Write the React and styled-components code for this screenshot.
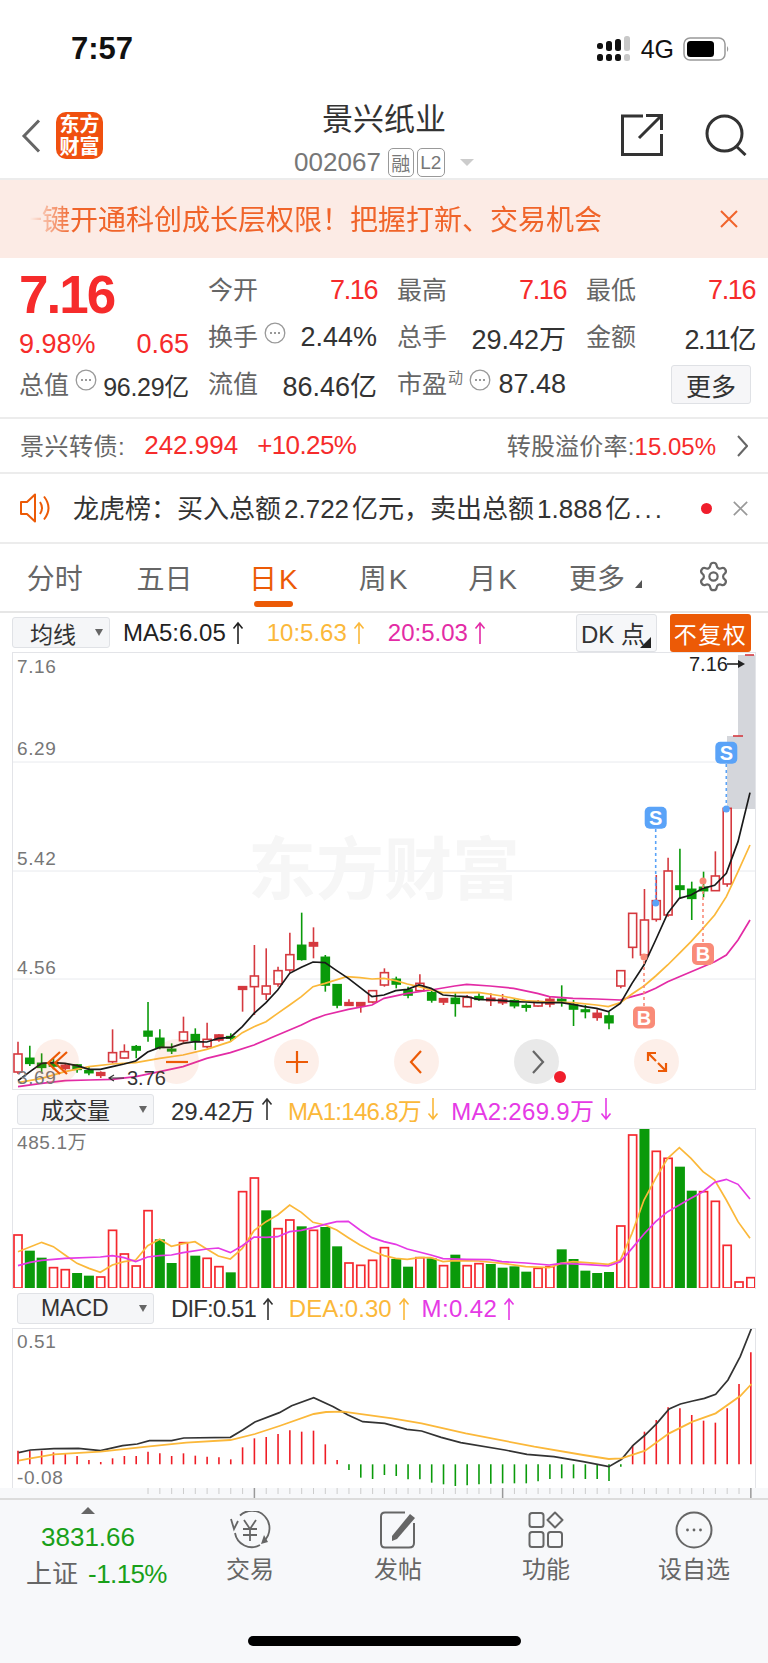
import React from 'react';
import styled, { createGlobalStyle } from 'styled-components';
import { Settings } from 'lucide-react';

const RED = '#f62b2b';
const ORANGE = '#f0642a';
const YELLOW = '#fbb83a';
const PINK = '#e32ba5';
const VIOLET = '#e53ae5';
const GREEN = '#0a9a0a';
const CANDLE_RED = '#d5393f';

const GlobalStyle = createGlobalStyle`
  html, body {
    margin: 0;
    padding: 0;
    background: #fff;
  }
  body {
    font-family: "Liberation Sans", "Noto Sans CJK SC", sans-serif;
    color: #333;
  }
`;

const Page = styled.div`
  width: 768px;
  height: 1663px;
  overflow: hidden;
  display: flex;
  flex-direction: column;
  background: #fff;
`;

/* status bar */
const StatusBar = styled.div`
  height: 90px;
  box-sizing: border-box;
  padding: 8px 38px 0 71px;
  display: flex;
  align-items: center;
  justify-content: space-between;
`;

const Clock = styled.div`
  font-size: 31px;
  font-weight: 700;
  color: #111;
`;

const StatusIcons = styled.div`
  display: flex;
  align-items: center;
`;

const Carrier = styled.span`
  font-size: 25px;
  color: #111;
  margin: 0 9px;
`;

/* nav */
const NavBar = styled.div`
  height: 90px;
  box-sizing: border-box;
  border-bottom: 2px solid #ececec;
  display: grid;
  grid-template-columns: 1fr auto 1fr;
`;

const NavLeft = styled.div`
  display: flex;
  align-items: center;
  padding: 3px 0 0 21px;
  gap: 15px;
`;

const NavRight = styled.div`
  display: flex;
  align-items: center;
  justify-content: flex-end;
  padding: 2px 21px 0 0;
  gap: 42px;
`;

const Logo = styled.div`
  width: 47px;
  height: 47px;
  border-radius: 10px;
  background: #f0500f;
  color: #fff;
  font-size: 20px;
  line-height: 22px;
  font-weight: 700;
  text-align: center;
  display: flex;
  align-items: center;
  justify-content: center;
`;

const NavCenter = styled.div`
  display: flex;
  flex-direction: column;
  align-items: center;
  padding-top: 14px;
`;

const Title = styled.div`
  font-size: 31px;
  line-height: 32px;
  color: #333;
`;

const CodeRow = styled.div`
  display: flex;
  align-items: center;
  margin-top: 11px;
  gap: 3px;
  font-size: 26px;
  color: #777;
`;

const Code = styled.span`
  margin-right: 4px;
`;

const Tag = styled.span`
  width: ${(p) => p.$w}px;
  height: 29px;
  box-sizing: border-box;
  border: 1px solid #999;
  border-radius: 5px;
  font-size: 19px;
  color: #777;
  display: flex;
  align-items: center;
  justify-content: center;
`;

const CaretDown = styled.span`
  width: 0;
  height: 0;
  margin-left: 12px;
  border-left: 7px solid transparent;
  border-right: 7px solid transparent;
  border-top: 7px solid #ccc;
`;

/* promo banner */
const Banner = styled.div`
  height: 78px;
  background: #fcebe5;
  display: flex;
  align-items: center;
  justify-content: space-between;
  padding: 0 30px 0 14px;
`;

const BannerText = styled.div`
  font-size: 28px;
  color: ${ORANGE};
  white-space: nowrap;
  margin-bottom: 2px;
  mask-image: linear-gradient(to right, transparent 16px, #000 58px);
`;

/* quote block */
const Quote = styled.div`
  height: 161px;
  box-sizing: border-box;
  border-bottom: 2px solid #ececec;
  padding: 9px 13px 0 19px;
  display: flex;
`;

const QuoteLeft = styled.div`
  width: 170px;
  margin-right: 19px;
  flex: none;
`;

const BigPrice = styled.div`
  height: 55px;
  line-height: 55px;
  font-size: 53px;
  font-weight: 700;
  color: ${RED};
  letter-spacing: -2px;
`;

const ChangeRow = styled.div`
  height: 45px;
  display: flex;
  align-items: center;
  justify-content: space-between;
  font-size: 27px;
  color: ${RED};
`;

const CapRow = styled.div`
  height: 36px;
  display: flex;
  align-items: center;
  color: #666;
  font-size: 25px;
`;

const CapValue = styled.span`
  margin-left: auto;
  font-size: 25px;
  letter-spacing: -0.3px;
  color: #333;
  white-space: nowrap;
`;

const StatGrid = styled.div`
  display: grid;
  grid-template-columns: repeat(3, 169px);
  grid-auto-rows: 47px;
  column-gap: 20px;
`;

const StatCell = styled.div`
  display: flex;
  align-items: center;
  white-space: nowrap;
`;

const StatLabel = styled.span`
  font-size: 25px;
  color: #666;
  margin-bottom: 5px;
`;

const StatSup = styled.sup`
  font-size: 15px;
  line-height: 1;
  color: #777;
  margin-left: 1px;
  margin-bottom: 14px;
`;

const StatValue = styled.span`
  margin-left: auto;
  font-size: 27px;
  color: ${(p) => (p.$red ? RED : '#333')};
  letter-spacing: ${(p) => (p.$tight ? '-1.4px' : '0')};
`;

const HintIcon = styled.svg`
  width: 22px;
  height: 22px;
  margin: 0 0 10px 6px;
  flex: none;
`;

const MoreButton = styled.div`
  margin-left: auto;
  margin-right: 4px;
  width: 80px;
  height: 39px;
  box-sizing: border-box;
  background: #f6f6f8;
  border: 1px solid #dfe1e5;
  border-radius: 3px;
  font-size: 25px;
  color: #333;
  display: flex;
  align-items: center;
  justify-content: center;
`;

/* convertible bond row */
const BondRow = styled.div`
  height: 55px;
  box-sizing: border-box;
  border-bottom: 2px solid #ececec;
  padding: 0 20px;
  display: flex;
  align-items: center;
  font-size: 24px;
  color: #666;
`;

const BondName = styled.span`
  letter-spacing: 0.5px;
  margin-bottom: 3px;
`;

const BondFigure = styled.span`
  font-size: 26px;
  color: ${RED};
  margin-left: ${(p) => p.$gap}px;
  letter-spacing: ${(p) => p.$spacing || 0}px;
`;

const BondPremium = styled.span`
  margin-left: auto;
  margin-right: 21px;
  letter-spacing: 0.2px;
  margin-bottom: 2px;
`;

const RedText = styled.span`
  color: ${RED};
  letter-spacing: 0;
`;

/* notice row */
const NoticeRow = styled.div`
  height: 70px;
  box-sizing: border-box;
  border-bottom: 2px solid #ececec;
  display: flex;
  align-items: center;
  padding: 0 20px;
`;

const NoticeText = styled.span`
  margin: 0 0 3px 21px;
  font-size: 26px;
  color: #333;
  white-space: nowrap;
`;

const NoticeNumber = styled.span`
  margin: 0 3px;
`;

const NoticeMore = styled.span`
  letter-spacing: 3px;
  margin-left: 3px;
`;

const NoticeDot = styled.span`
  width: 11px;
  height: 11px;
  margin-left: auto;
  margin-right: 21px;
  border-radius: 50%;
  background: #f01e2c;
`;

/* period tabs */
const TabBar = styled.div`
  height: 69px;
  box-sizing: border-box;
  border-bottom: 2px solid #e6e6e6;
  display: grid;
  grid-template-columns: repeat(7, 1fr);
`;

const Tab = styled.div`
  position: relative;
  display: flex;
  align-items: center;
  justify-content: center;
  padding: 0 0 2px ${(p) => p.$inset || 0}px;
  font-size: 28px;
  letter-spacing: ${(p) => (p.$spread ? '2px' : '0')};
  color: ${(p) => (p.$active ? '#ec5a06' : '#666')};
`;

const TabMark = styled.span`
  position: absolute;
  bottom: 4px;
  left: 50%;
  width: 39px;
  height: 6px;
  margin-left: -20px;
  border-radius: 3px;
  background: #ec5a06;
`;

const TabCorner = styled.span`
  width: 0;
  height: 0;
  margin: 14px 0 0 10px;
  border-left: 7px solid transparent;
  border-bottom: 8px solid #555;
`;

/* legend toolbars */
const Toolbar = styled.div`
  height: ${(p) => p.$h}px;
  box-sizing: border-box;
  display: flex;
  align-items: center;
  padding: 0 17px 0 ${(p) => p.$left}px;
`;

const SelectBox = styled.div`
  width: ${(p) => p.$w}px;
  height: 31px;
  box-sizing: border-box;
  background: #f5f6f8;
  border: 1px solid #e0e2e6;
  border-radius: 3px;
  font-size: 23px;
  color: #333;
  display: flex;
  align-items: center;
  padding: 0 6px 0 ${(p) => p.$pad}px;
  margin-right: ${(p) => p.$gap}px;
`;

const SelectCaret = styled.span`
  width: 0;
  height: 0;
  margin-left: auto;
  border-left: 4px solid transparent;
  border-right: 4px solid transparent;
  border-top: 7px solid #666;
`;

const Legend = styled.span`
  display: flex;
  align-items: center;
  font-size: 24px;
  white-space: nowrap;
  color: ${(p) => p.$color};
  margin-right: ${(p) => p.$gap}px;
  letter-spacing: ${(p) => p.$spacing || 0}px;
`;

const ArrowGlyph = styled.svg`
  width: 12px;
  height: 24px;
  margin-left: 6px;
`;

const DkButton = styled.div`
  margin-left: auto;
  width: 81px;
  height: 38px;
  box-sizing: border-box;
  background: #f6f7f9;
  border: 1px solid #e0e2e6;
  border-radius: 3px;
  font-size: 24px;
  color: #333;
  position: relative;
  display: flex;
  align-items: center;
  padding-left: 4px;
`;

const DkCorner = styled.span`
  position: absolute;
  right: 5px;
  bottom: 3px;
  width: 0;
  height: 0;
  border-left: 11px solid transparent;
  border-bottom: 11px solid #222;
`;

const PlainButton = styled.div`
  margin-left: 13px;
  width: 81px;
  height: 38px;
  background: #ec5a06;
  border-radius: 3px;
  color: #fff;
  font-size: 23px;
  letter-spacing: 1.5px;
  display: flex;
  align-items: center;
  justify-content: center;
`;

/* chart panels */
const ChartPanel = styled.div`
  position: relative;
  margin-left: 12px;
  width: 744px;
  box-sizing: border-box;
  border: 1px solid #e3e4e8;
  border-bottom-width: ${(p) => (p.$open ? 0 : 1)}px;
  height: ${(p) => p.$h}px;
  overflow: hidden;
`;

const ChartSvg = styled.svg`
  display: block;
  width: 742px;
  height: ${(p) => p.$h}px;
`;

const AxisLabel = styled.text`
  font-size: 19px;
  letter-spacing: 0.6px;
  fill: #777;
`;

const Watermark = styled.div`
  position: absolute;
  left: 235px;
  top: 172px;
  font-size: 68px;
  font-weight: 700;
  line-height: 90px;
  color: #f6f6f6;
  white-space: nowrap;
`;

const ControlRow = styled.div`
  position: absolute;
  left: 21px;
  bottom: 5px;
  display: flex;
  gap: 75px;
`;

const ControlButton = styled.div`
  position: relative;
  width: 45px;
  height: 45px;
  border-radius: 50%;
  background: ${(p) => (p.$muted ? 'rgba(225,225,225,0.75)' : 'rgba(240,100,40,0.1)')};
  display: flex;
  align-items: center;
  justify-content: center;
`;

const ControlDot = styled.span`
  position: absolute;
  left: 40px;
  top: 32px;
  width: 12px;
  height: 12px;
  border-radius: 50%;
  background: #f01e2c;
`;

const TickStrip = styled.svg`
  display: block;
  width: 768px;
  height: 10px;
  background: #f7f8fa;
`;

/* bottom bar */
const BottomBar = styled.div`
  flex: 1;
  position: relative;
  border-top: 2px solid #dcdcdc;
  background: #f7f8fa;
  display: grid;
  grid-template-columns: 176px repeat(4, 148px);
  align-items: start;
`;

const IndexBlock = styled.div`
  display: flex;
  flex-direction: column;
  align-items: center;
  padding-top: 7px;
`;

const IndexCaret = styled.span`
  width: 0;
  height: 0;
  border-left: 7px solid transparent;
  border-right: 7px solid transparent;
  border-bottom: 7px solid #666;
`;

const IndexValue = styled.div`
  margin-top: 8px;
  font-size: 26px;
  line-height: 30px;
  color: #19a019;
`;

const IndexRow = styled.div`
  margin: 5px 0 0 17px;
  display: flex;
  align-items: center;
  gap: 10px;
  font-size: 26px;
  line-height: 34px;
  color: #666;
  white-space: nowrap;
`;

const IndexChange = styled.span`
  color: #19a019;
  letter-spacing: -0.6px;
`;

const ActionItem = styled.div`
  display: flex;
  flex-direction: column;
  align-items: center;
  padding-top: 11px;
  color: #666;
`;

const ActionLabel = styled.div`
  margin-top: 7px;
  font-size: 24px;
  line-height: 28px;
  color: #666;
`;

const HomeIndicator = styled.div`
  position: absolute;
  left: 248px;
  bottom: 17px;
  width: 273px;
  height: 10px;
  border-radius: 5px;
  background: #000;
`;

/* --- data, read off the picture: y values are 3x crop coordinates --- */
const candleX = (i) => 18 + 11.82 * i;
const toY = (z) => 610 + z / 3;
const volY = (z) => 1085 + z / 3;
const macdY = (z) => 1290 + z / 3;

// [kind, bodyTop, bodyBottom, high, low] r hollow red, f filled red, g green
const candles = [
  ['r', 1332, 1386, 1295, 1392], ['g', 1345, 1360, 1307, 1368], ['g', 1360, 1372, 1330, 1390],
  ['g', 1358, 1368, 1345, 1378], ['f', 1366, 1375, 1360, 1382], ['g', 1365, 1378, 1362, 1388],
  ['g', 1382, 1388, 1370, 1396], ['f', 1388, 1396, 1384, 1404], ['r', 1328, 1355, 1258, 1360],
  ['r', 1325, 1344, 1303, 1346], ['g', 1310, 1320, 1305, 1345], ['g', 1264, 1278, 1176, 1295],
  ['g', 1285, 1312, 1258, 1318], ['g', 1318, 1322, 1300, 1332], ['r', 1266, 1292, 1220, 1298],
  ['g', 1274, 1292, 1255, 1320], ['r', 1288, 1310, 1238, 1315], ['f', 1275, 1290, 1272, 1295],
  ['g', 1280, 1282, 1270, 1295], ['f', 1130, 1138, 1130, 1205], ['r', 1098, 1130, 1005, 1215],
  ['r', 1128, 1152, 1015, 1170], ['r', 1082, 1122, 1070, 1130], ['r', 1034, 1080, 968, 1088],
  ['g', 1006, 1048, 908, 1052], ['f', 998, 1008, 952, 1045], ['g', 1042, 1125, 1035, 1145],
  ['g', 1124, 1185, 1124, 1195], ['f', 1178, 1186, 1168, 1188], ['f', 1178, 1188, 1178, 1208],
  ['r', 1142, 1176, 1140, 1180], ['r', 1088, 1125, 1075, 1130], ['g', 1108, 1122, 1100, 1135],
  ['g', 1140, 1155, 1130, 1165], ['r', 1120, 1142, 1093, 1145], ['g', 1148, 1170, 1140, 1178],
  ['f', 1166, 1176, 1166, 1185], ['g', 1165, 1180, 1150, 1220], ['r', 1162, 1190, 1155, 1192],
  ['g', 1160, 1168, 1150, 1172], ['f', 1165, 1172, 1150, 1188], ['f', 1168, 1178, 1152, 1185],
  ['g', 1172, 1187, 1165, 1195], ['g', 1187, 1190, 1180, 1205], ['r', 1175, 1188, 1170, 1190],
  ['f', 1168, 1182, 1160, 1192], ['g', 1168, 1172, 1126, 1190], ['g', 1185, 1197, 1170, 1248],
  ['g', 1200, 1204, 1185, 1225], ['f', 1210, 1222, 1198, 1232], ['g', 1218, 1238, 1205, 1258],
  ['r', 1082, 1128, 1080, 1135], ['r', 910, 1012, 910, 1045], ['r', 930, 1035, 837, 1050],
  ['r', 872, 928, 795, 935], ['r', 783, 915, 743, 920], ['g', 828, 838, 716, 865],
  ['g', 838, 865, 815, 930], ['g', 832, 842, 785, 862], ['r', 798, 842, 724, 842],
  ['r', 595, 822, 595, 830],
];

const splitLine = (left, right, yFn) =>
  [...left.map(([x, y]) => [x / 3, yFn(y)]), ...right.map(([x, y]) => [384 + x / 3, yFn(y)])]
    .map((p) => p.join(','))
    .join(' ');

const ma5 = splitLine(
  [[54, 1412], [90, 1385], [125, 1360], [160, 1358], [195, 1360], [231, 1367], [267, 1378], [301, 1378], [337, 1370], [372, 1362], [407, 1353], [443, 1326], [479, 1312], [514, 1312], [549, 1300], [585, 1295], [620, 1296], [655, 1285], [691, 1282], [727, 1250], [762, 1210], [798, 1178], [833, 1140], [869, 1090], [904, 1072], [939, 1056], [975, 1058], [1010, 1082], [1045, 1105], [1080, 1132], [1116, 1160]],
  [[0, 1155], [35, 1142], [70, 1138], [105, 1125], [141, 1135], [177, 1155], [212, 1158], [248, 1160], [283, 1168], [318, 1170], [354, 1172], [389, 1175], [425, 1176], [460, 1178], [496, 1178], [531, 1178], [567, 1183], [602, 1190], [638, 1195], [673, 1205], [709, 1180], [744, 1120], [780, 1065], [815, 990], [851, 910], [886, 865], [921, 855], [957, 835], [992, 826], [1027, 790], [1062, 695], [1098, 548]],
  toY
);
const ma10 = splitLine(
  [[54, 1418], [125, 1405], [195, 1385], [267, 1370], [337, 1362], [407, 1358], [479, 1345], [549, 1335], [620, 1318], [691, 1295], [727, 1268], [762, 1250], [798, 1235], [833, 1210], [869, 1185], [904, 1160], [939, 1130], [975, 1120], [1040, 1100], [1080, 1103], [1116, 1107]],
  [[0, 1105], [35, 1112], [70, 1122], [105, 1130], [141, 1140], [177, 1148], [212, 1148], [283, 1147], [354, 1158], [425, 1172], [496, 1176], [567, 1178], [638, 1185], [673, 1190], [709, 1178], [744, 1152], [780, 1128], [815, 1098], [851, 1065], [886, 1030], [921, 995], [957, 955], [992, 915], [1027, 860], [1062, 785], [1098, 705]],
  toY
);
const ma20 = splitLine(
  [[54, 1430], [125, 1420], [195, 1412], [267, 1410], [337, 1408], [407, 1400], [479, 1385], [549, 1370], [620, 1345], [691, 1328], [762, 1305], [833, 1275], [904, 1245], [939, 1228], [975, 1215], [1045, 1198], [1116, 1185]],
  [[0, 1165], [70, 1150], [141, 1140], [212, 1128], [248, 1123], [318, 1128], [389, 1135], [460, 1150], [496, 1160], [567, 1165], [638, 1167], [709, 1170], [744, 1160], [780, 1150], [815, 1135], [851, 1115], [886, 1100], [957, 1070], [992, 1055], [1027, 1035], [1062, 990], [1098, 930]],
  toY
);

// [kind, top]
const volumes = [
  ['r', 450], ['g', 497], ['g', 518], ['r', 548], ['r', 554], ['g', 564], ['g', 572], ['r', 576],
  ['r', 436], ['r', 507], ['r', 543], ['r', 377], ['g', 463], ['g', 534], ['r', 473], ['g', 512],
  ['r', 520], ['r', 545], ['g', 562], ['r', 320], ['r', 279], ['g', 376], ['r', 431], ['r', 405],
  ['g', 424], ['r', 436], ['g', 426], ['g', 484], ['r', 534], ['r', 541], ['r', 526], ['r', 488],
  ['g', 522], ['g', 545], ['r', 518], ['g', 520], ['r', 542], ['g', 509], ['r', 542], ['r', 536],
  ['g', 537], ['g', 548], ['g', 544], ['g', 560], ['r', 550], ['r', 545], ['g', 493], ['g', 522],
  ['g', 557], ['g', 564], ['g', 561], ['r', 423], ['r', 150], ['g', 132], ['r', 199], ['r', 220],
  ['g', 245], ['g', 317], ['r', 320], ['r', 349], ['r', 481], ['r', 591], ['r', 578],
];

const volMa1 = splitLine(
  [[54, 500], [125, 472], [160, 485], [195, 510], [231, 535], [267, 550], [301, 562], [337, 540], [372, 530], [407, 525], [443, 482], [479, 463], [514, 484], [549, 476], [585, 470], [620, 492], [655, 513], [691, 522], [727, 490], [762, 437], [798, 410], [833, 390], [869, 360], [904, 382], [939, 412], [975, 420], [1010, 435], [1045, 458], [1080, 480], [1116, 498]],
  [[0, 512], [35, 520], [70, 523], [105, 518], [141, 518], [177, 530], [212, 527], [283, 528], [354, 535], [425, 545], [496, 548], [531, 535], [567, 530], [638, 535], [673, 538], [709, 525], [744, 445], [780, 345], [815, 280], [851, 220], [886, 188], [921, 220], [957, 260], [992, 285], [1027, 345], [1062, 410], [1098, 460]],
  volY
);
const volMa2 = splitLine(
  [[54, 542], [90, 532], [125, 526], [195, 520], [301, 516], [337, 512], [372, 518], [407, 530], [443, 516], [479, 512], [514, 510], [549, 503], [620, 492], [655, 489], [691, 503], [727, 482], [762, 456], [798, 457], [833, 455], [869, 440], [904, 436], [939, 428], [975, 418], [1010, 410], [1045, 409], [1080, 435], [1116, 458]],
  [[0, 470], [35, 478], [70, 492], [141, 510], [177, 521], [248, 523], [318, 524], [354, 530], [425, 534], [496, 540], [531, 535], [602, 538], [673, 543], [709, 530], [744, 490], [780, 447], [815, 410], [851, 380], [886, 360], [921, 340], [957, 320], [992, 292], [1027, 283], [1062, 298], [1098, 342]],
  volY
);

// macd crop has x scaled by 2.04 and y by 3; the bar value is the far end from zero
const MACD_ZERO = 523;
const macdBars = [
  482, 482, 482, 487, 490, 498, 510, 516, 505, 498, 498, 485, 490, 498, 490, 497, 500, 502, 508,
  472, 445, 441, 432, 421, 425, 422, 463, 510,
  540, 563, 567, 555, 558, 568, 568, 578, 583, 588, 586, 583, 581, 580, 580, 580, 574, 567, 565, 565, 567, 567, 573, 530,
  465, 425, 390, 352, 355, 375, 392, 398, 355, 282, 187,
];

const macdLine = (pts) => pts.map(([x, y]) => `${x / 2.04},${macdY(y)}`).join(' ');
const dif = macdLine([[38, 488], [62, 480], [110, 476], [160, 475], [205, 482], [250, 467], [280, 462], [305, 452], [350, 452], [375, 444], [470, 442], [495, 420], [520, 396], [570, 368], [595, 347], [640, 323], [680, 350], [710, 375], [740, 395], [785, 400], [830, 418], [860, 423], [900, 442], [940, 458], [1030, 480], [1075, 493], [1130, 500], [1190, 515], [1242, 530], [1268, 508], [1292, 465], [1316, 435], [1340, 400], [1365, 357], [1388, 342], [1413, 333], [1437, 325], [1460, 313], [1485, 270], [1510, 200], [1533, 115]]);
const dea = macdLine([[38, 512], [62, 505], [110, 493], [205, 485], [300, 470], [380, 458], [470, 450], [520, 432], [570, 408], [640, 372], [665, 366], [700, 365], [800, 385], [860, 400], [950, 430], [1090, 470], [1190, 495], [1242, 507], [1268, 505], [1316, 482], [1365, 430], [1413, 395], [1460, 370], [1510, 318], [1533, 282]]);

/* --- small drawings --- */
const SignalIcon = () => (
  <svg width="36" height="26" viewBox="0 0 36 26">
    {[[1, 7, 13], [10, 5, 15], [19, 3, 15], [28, 0, 15]].map(([x, top, bottom], i) => (
      <g key={x} fill={i === 3 ? '#c8c8c8' : '#111'}>
        <rect x={x} y={top} width="6" height={bottom - top} rx="2.5" />
        <rect x={x} y="18" width="6" height="7" rx="2.5" />
      </g>
    ))}
  </svg>
);

const BatteryIcon = () => (
  <svg width="47" height="24" viewBox="0 0 47 24">
    <rect x="1" y="1" width="41" height="22" rx="6" fill="none" stroke="#999" strokeWidth="1.5" />
    <rect x="4" y="4" width="27" height="16" rx="3.5" fill="#000" />
    <path d="M44 9 q2.5 3 0 6z" fill="#999" />
  </svg>
);

const BackIcon = () => (
  <svg width="20" height="34" viewBox="0 0 20 34" fill="none" stroke="#666" strokeWidth="3">
    <path d="M18 1.5 L3 17 L18 32.5" />
  </svg>
);

const ShareIcon = () => (
  <svg width="42" height="42" viewBox="0 0 42 42" fill="none" stroke="#333" strokeWidth="3">
    <path d="M22 2 H1.5 V40.5 H40.5 V20" />
    <path d="M18 24 L40 2 M25 1.5 H40.5 V16" />
  </svg>
);

const SearchIcon = () => (
  <svg width="42" height="42" viewBox="0 0 42 42" fill="none" stroke="#333" strokeWidth="3">
    <circle cx="19.5" cy="19.5" r="17.5" />
    <path d="M31 32 L40.5 41" />
  </svg>
);

const CloseIcon = ({ size, color }) => (
  <svg width={size} height={size} viewBox="0 0 18 18" fill="none" stroke={color} strokeWidth="2">
    <path d="M1 1 L17 17 M17 1 L1 17" />
  </svg>
);

const Hint = () => (
  <HintIcon viewBox="0 0 22 22">
    <circle cx="11" cy="11" r="9.8" fill="none" stroke="#999" strokeWidth="1.3" />
    <circle cx="7" cy="11" r="1" fill="#777" />
    <circle cx="11" cy="11" r="1" fill="#777" />
    <circle cx="15" cy="11" r="1" fill="#777" />
  </HintIcon>
);

const ChevronRight = () => (
  <svg width="11" height="22" viewBox="0 0 11 22" fill="none" stroke="#666" strokeWidth="2">
    <path d="M1 1 L10 11 L1 21" />
  </svg>
);

const SpeakerIcon = () => (
  <svg width="32" height="30" viewBox="0 0 32 30" fill="none" stroke="#ec5a06" strokeWidth="2" style={{ flex: 'none' }}>
    <path d="M1 9 H7 L15 1.5 V28.5 L7 21 H1 Z" strokeLinejoin="round" />
    <path d="M20 9 Q24 15 20 21" />
    <path d="M24 3.5 Q33 15 24 26.5" />
  </svg>
);

const LegendArrow = ({ down }) => (
  <ArrowGlyph viewBox="0 0 12 24" fill="none" stroke="currentColor" strokeWidth="1.6">
    {down ? <path d="M6 1 V22 M1.5 16.5 L6 22 L10.5 16.5" /> : <path d="M6 23 V2 M1.5 7.5 L6 2 L10.5 7.5" />}
  </ArrowGlyph>
);

const ControlGlyph = ({ children, color = '#ec5a06' }) => (
  <svg width="26" height="26" viewBox="0 0 26 26" fill="none" stroke={color} strokeWidth="2.2">
    {children}
  </svg>
);

const Candle = ({ kind, top, bottom, high, low, i }) => {
  const x = candleX(i);
  const color = kind === 'g' ? GREEN : CANDLE_RED;
  return (
    <g stroke={color} strokeWidth="1.6">
      <line x1={x} x2={x} y1={toY(high)} y2={toY(top)} />
      <line x1={x} x2={x} y1={toY(bottom)} y2={toY(low)} />
      <rect
        x={x - 4}
        width="8"
        y={toY(top)}
        height={Math.max(1.5, (bottom - top) / 3)}
        fill={kind === 'r' ? '#fff' : color}
      />
    </g>
  );
};

const SignalMark = ({ x, y, fromY, toYPos, label, color }) => (
  <g>
    <line x1={x} x2={x} y1={fromY} y2={toYPos} stroke={color} strokeWidth="1.6" strokeDasharray="3 3" />
    <circle cx={x} cy={toYPos} r="3.5" fill={color} />
    <rect x={x - 11} y={y - 11} width="22" height="22" rx="5" fill={color} />
    <text x={x} y={y + 7} textAnchor="middle" fontSize="20" fontWeight="700" fill="#fff">
      {label}
    </text>
  </g>
);

const PriceChart = () => (
  <ChartSvg $h={436} viewBox="13 653 742 436">
    {[762, 871, 979].map((y) => (
      <line key={y} x1="13" x2="755" y1={y} y2={y} stroke="#e8eaee" strokeWidth="1" />
    ))}
    <rect x="727" y="736" width="28" height="73" fill="#d4d6db" />
    <rect x="738" y="655" width="17" height="82" fill="#d4d6db" />
    {candles.map(([kind, top, bottom, high, low], i) => (
      <Candle key={i} i={i} kind={kind} top={top} bottom={bottom} high={high} low={low} />
    ))}
    <line x1="733" x2="743" y1="736" y2="736" stroke={CANDLE_RED} strokeWidth="1.6" />
    <line x1="745" x2="754" y1="655" y2="655" stroke={CANDLE_RED} strokeWidth="1.6" />
    <polyline points={ma20} fill="none" stroke={PINK} strokeWidth="1.7" />
    <polyline points={ma10} fill="none" stroke={YELLOW} strokeWidth="1.7" />
    <polyline points={ma5} fill="none" stroke="#1a1a1a" strokeWidth="1.7" />
    <SignalMark x={655.7} y={817.7} fromY={829} toYPos={903} label="S" color="#5aa3f8" />
    <SignalMark x={726.3} y={752.7} fromY={764} toYPos={809} label="S" color="#5aa3f8" />
    <SignalMark x={644} y={1017.5} fromY={1006} toYPos={957} label="B" color="#f98b78" />
    <SignalMark x={703} y={954} fromY={942} toYPos={881} label="B" color="#f98b78" />
    <AxisLabel x="17" y="673">7.16</AxisLabel>
    <AxisLabel x="17" y="755">6.29</AxisLabel>
    <AxisLabel x="17" y="865">5.42</AxisLabel>
    <AxisLabel x="17" y="974">4.56</AxisLabel>
    <AxisLabel x="17" y="1084">3.69</AxisLabel>
    <text x="689" y="671" fontSize="20" fill="#222">7.16</text>
    <path d="M727 664 H740" fill="none" stroke="#222" strokeWidth="1.6" />
    <path d="M738 660 L745 664 L738 668 Z" fill="#222" />
    <path d="M110 1078 H124 M114 1075 L109 1078 L114 1081" fill="none" stroke="#333" strokeWidth="1.2" />
    <text x="127" y="1085" fontSize="20" fill="#333">3.76</text>
  </ChartSvg>
);

const VolumeChart = () => (
  <ChartSvg $h={159} viewBox="13 1129 742 159">
    {volumes.map(([kind, top], i) => {
      const x = candleX(i);
      const y = volY(top);
      return kind === 'g' ? (
        <rect key={i} x={x - 5} width="10" y={y} height={1288 - y} fill={GREEN} />
      ) : (
        <rect key={i} x={x - 4} width="8" y={y} height={1288 - y} fill="#fff" stroke="#f5292f" strokeWidth="1.7" />
      );
    })}
    <polyline points={volMa1} fill="none" stroke={YELLOW} strokeWidth="1.7" />
    <polyline points={volMa2} fill="none" stroke={VIOLET} strokeWidth="1.7" />
    <AxisLabel x="17" y="1149">485.1万</AxisLabel>
  </ChartSvg>
);

const MacdChart = () => (
  <ChartSvg $h={159} viewBox="13 1329 742 159">
    {macdBars.map((v, i) => {
      const x = candleX(i);
      return (
        <line
          key={i}
          x1={x}
          x2={x}
          y1={macdY(MACD_ZERO)}
          y2={macdY(v)}
          stroke={v > MACD_ZERO ? '#0a9a0a' : '#ef1c25'}
          strokeWidth="1.6"
        />
      );
    })}
    <polyline points={dif} fill="none" stroke="#333" strokeWidth="1.7" />
    <polyline points={dea} fill="none" stroke={YELLOW} strokeWidth="1.8" />
    <AxisLabel x="17" y="1348">0.51</AxisLabel>
    <AxisLabel x="17" y="1484">-0.08</AxisLabel>
  </ChartSvg>
);

const ticks = Array.from({ length: 52 }, (_, n) => n + 11);

const TradeIcon = () => (
  <svg width="44" height="38" viewBox="0 0 44 38" fill="none" stroke="#666" strokeWidth="1.8">
    <path d="M12 4.5 A17 17 0 0 1 36 30" />
    <path d="M32 34 A17 17 0 0 1 7 22" />
    <path d="M3 8 L6 18 L10 10" />
    <path d="M36 24 L40 31 L33 33" fill="#666" stroke="none" />
    <path d="M16 9 L22 18 L28 9 M22 18 V30 M15 18 H29 M15 24 H29" />
  </svg>
);

const PostIcon = () => (
  <svg width="38" height="38" viewBox="0 0 38 38" fill="none" stroke="#666" strokeWidth="2">
    <path d="M26 1.5 H6 Q2 1.5 2 5.5 V32 Q2 36.5 6 36.5 H30 Q35 36.5 35 32 V12" />
    <path d="M13 25 L31 3 L36 7 L18 28 L13 30 Z" fill="#666" stroke="none" />
  </svg>
);

const FeaturesIcon = () => (
  <svg width="36" height="38" viewBox="0 0 36 38" fill="none" stroke="#666" strokeWidth="2">
    <rect x="1.5" y="2" width="14" height="14" rx="2.5" />
    <rect x="1.5" y="21" width="14" height="15" rx="2.5" />
    <rect x="20" y="21" width="14" height="15" rx="2.5" />
    <path d="M27 1.5 L34.5 9 L27 16.5 L19.5 9 Z" strokeLinejoin="round" />
  </svg>
);

const WatchIcon = () => (
  <svg width="38" height="38" viewBox="0 0 38 38" fill="none" stroke="#666" strokeWidth="2">
    <circle cx="19" cy="19" r="17.5" />
    <circle cx="12.5" cy="19" r="1.4" fill="#666" stroke="none" />
    <circle cx="19" cy="19" r="1.4" fill="#666" stroke="none" />
    <circle cx="25.5" cy="19" r="1.4" fill="#666" stroke="none" />
  </svg>
);

const Stat = ({ label, sup, hint, value, red, tight }) => (
  <StatCell>
    <StatLabel>{label}</StatLabel>
    {sup && <StatSup>{sup}</StatSup>}
    {hint && <Hint />}
    <StatValue $red={red} $tight={tight}>{value}</StatValue>
  </StatCell>
);

const App = () => (
  <Page>
    <GlobalStyle />
    <StatusBar>
      <Clock>7:57</Clock>
      <StatusIcons>
        <SignalIcon />
        <Carrier>4G</Carrier>
        <BatteryIcon />
      </StatusIcons>
    </StatusBar>

    <NavBar>
      <NavLeft>
        <BackIcon />
        <Logo>东方<br />财富</Logo>
      </NavLeft>
      <NavCenter>
        <Title>景兴纸业</Title>
        <CodeRow>
          <Code>002067</Code>
          <Tag $w={26}>融</Tag>
          <Tag $w={28}>L2</Tag>
          <CaretDown />
        </CodeRow>
      </NavCenter>
      <NavRight>
        <ShareIcon />
        <SearchIcon />
      </NavRight>
    </NavBar>

    <Banner>
      <BannerText>一键开通科创成长层权限！把握打新、交易机会</BannerText>
      <CloseIcon size={18} color={ORANGE} />
    </Banner>

    <Quote>
      <QuoteLeft>
        <BigPrice>7.16</BigPrice>
        <ChangeRow>
          <span>9.98%</span>
          <span>0.65</span>
        </ChangeRow>
        <CapRow>
          <StatLabel>总值</StatLabel>
          <Hint />
          <CapValue>96.29亿</CapValue>
        </CapRow>
      </QuoteLeft>
      <StatGrid>
        <Stat label="今开" value="7.16" red tight />
        <Stat label="最高" value="7.16" red tight />
        <Stat label="最低" value="7.16" red tight />
        <Stat label="换手" hint value="2.44%" />
        <Stat label="总手" value="29.42万" />
        <Stat label="金额" value="2.11亿" tight />
        <Stat label="流值" value="86.46亿" />
        <Stat label="市盈" sup="动" hint value="87.48" />
        <StatCell>
          <MoreButton>更多</MoreButton>
        </StatCell>
      </StatGrid>
    </Quote>

    <BondRow>
      <BondName>景兴转债:</BondName>
      <BondFigure $gap={19}>242.994</BondFigure>
      <BondFigure $gap={19} $spacing={-0.6}>+10.25%</BondFigure>
      <BondPremium>
        转股溢价率:<RedText>15.05%</RedText>
      </BondPremium>
      <ChevronRight />
    </BondRow>

    <NoticeRow>
      <SpeakerIcon />
      <NoticeText>
        龙虎榜：买入总额<NoticeNumber>2.722</NoticeNumber>亿元，卖出总额<NoticeNumber>1.888</NoticeNumber>亿<NoticeMore>...</NoticeMore>
      </NoticeText>
      <NoticeDot />
      <CloseIcon size={15} color="#999" />
    </NoticeRow>

    <TabBar>
      <Tab>分时</Tab>
      <Tab>五日</Tab>
      <Tab $active $spread>日K<TabMark /></Tab>
      <Tab $spread>周K</Tab>
      <Tab $spread>月K</Tab>
      <Tab $inset={4}>更多<TabCorner /></Tab>
      <Tab><Settings size={33} strokeWidth={1.6} color="#666" /></Tab>
    </TabBar>

    <Toolbar $h={39} $left={12}>
      <SelectBox $w={98} $pad={17} $gap={13}>均线<SelectCaret /></SelectBox>
      <Legend $color="#222" $gap={23}>MA5:6.05<LegendArrow /></Legend>
      <Legend $color={YELLOW} $gap={23}>10:5.63<LegendArrow /></Legend>
      <Legend $color={PINK} $gap={0}>20:5.03<LegendArrow /></Legend>
      <DkButton>DK 点<DkCorner /></DkButton>
      <PlainButton>不复权</PlainButton>
    </Toolbar>

    <ChartPanel $h={438}>
      <Watermark>东方财富</Watermark>
      <PriceChart />
      <ControlRow>
        <ControlButton>
          <ControlGlyph><path d="M16 3 L4 14 L16 25 M23 3 L11 14 L23 25" /></ControlGlyph>
        </ControlButton>
        <ControlButton>
          <ControlGlyph><path d="M2 13 H24" /></ControlGlyph>
        </ControlButton>
        <ControlButton>
          <ControlGlyph><path d="M2 13 H24 M13 2 V24" /></ControlGlyph>
        </ControlButton>
        <ControlButton>
          <ControlGlyph><path d="M17 2 L7 13 L17 24" /></ControlGlyph>
        </ControlButton>
        <ControlButton $muted>
          <ControlGlyph color="#666"><path d="M9 2 L19 13 L9 24" /></ControlGlyph>
          <ControlDot />
        </ControlButton>
        <ControlButton>
          <ControlGlyph><path d="M4 12 V4 H12 M4 4 L12 12 M22 14 V22 H14 M22 22 L14 14" /></ControlGlyph>
        </ControlButton>
      </ControlRow>
    </ChartPanel>

    <Toolbar $h={38} $left={17}>
      <SelectBox $w={137} $pad={23} $gap={17}>成交量<SelectCaret /></SelectBox>
      <Legend $color="#333" $gap={15}>29.42万<LegendArrow /></Legend>
      <Legend $color={YELLOW} $gap={12} $spacing={-0.7}>MA1:146.8万<LegendArrow down /></Legend>
      <Legend $color={VIOLET} $gap={0} $spacing={0.3}>MA2:269.9万<LegendArrow down /></Legend>
    </Toolbar>

    <ChartPanel $h={161} $open>
      <VolumeChart />
    </ChartPanel>

    <Toolbar $h={39} $left={17}>
      <SelectBox $w={137} $pad={23} $gap={17}>MACD<SelectCaret /></SelectBox>
      <Legend $color="#333" $gap={15} $spacing={-0.9}>DIF:0.51<LegendArrow /></Legend>
      <Legend $color={YELLOW} $gap={12}>DEA:0.30<LegendArrow /></Legend>
      <Legend $color={VIOLET} $gap={0} $spacing={0.4}>M:0.42<LegendArrow /></Legend>
    </Toolbar>

    <ChartPanel $h={160} $open>
      <MacdChart />
    </ChartPanel>

    <TickStrip viewBox="0 0 768 10">
      {ticks.map((n) => {
        const x = candleX(n);
        const major = n === 20 || n === 41 || n === 62;
        return (
          <line
            key={n}
            x1={x}
            x2={x}
            y1="0"
            y2={major ? 10 : 6}
            stroke={major ? '#999' : '#ccc'}
            strokeWidth={major ? 1.5 : 1}
          />
        );
      })}
    </TickStrip>

    <BottomBar>
      <IndexBlock>
        <IndexCaret />
        <IndexValue>3831.66</IndexValue>
        <IndexRow>
          上证
          <IndexChange>-1.15%</IndexChange>
        </IndexRow>
      </IndexBlock>
      <ActionItem><TradeIcon /><ActionLabel>交易</ActionLabel></ActionItem>
      <ActionItem><PostIcon /><ActionLabel>发帖</ActionLabel></ActionItem>
      <ActionItem><FeaturesIcon /><ActionLabel>功能</ActionLabel></ActionItem>
      <ActionItem><WatchIcon /><ActionLabel>设自选</ActionLabel></ActionItem>
      <HomeIndicator />
    </BottomBar>
  </Page>
);

export default App;
